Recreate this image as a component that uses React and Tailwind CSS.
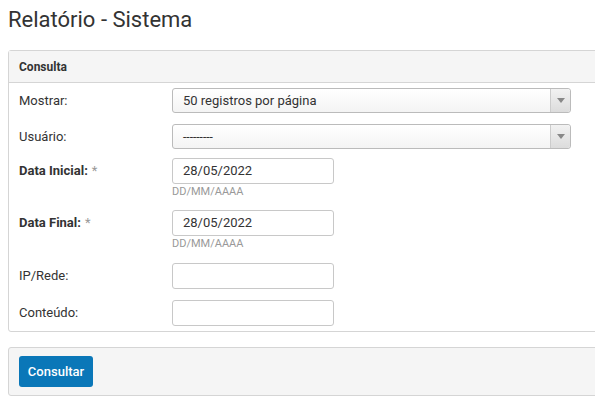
import React from "react";

const Select = ({ value, small }) => (
  <div className="relative w-[399px] h-[25px] rounded-[3px] border border-[#bbb] bg-gradient-to-b from-white to-[#f4f4f4] flex items-center">
    <span className={small ? "pl-[10px] text-[12px] text-[#333] leading-none" : "pl-[10px] text-[13px] text-[#333]"}>
      {value}
    </span>
    <div className="absolute right-0 top-0 h-full w-[20px] border-l border-[#ccc] bg-gradient-to-b from-[#f2f2f2] to-[#dcdcdc] rounded-r-[3px] flex items-center justify-center">
      <div className="w-0 h-0 border-l-[4px] border-r-[4px] border-t-[5px] border-l-transparent border-r-transparent border-t-[#888]" />
    </div>
  </div>
);

const Input = ({ value }) => (
  <div className="w-[162px] h-[26px] rounded-[3px] border border-[#c8c8c8] bg-white flex items-center px-[10px] text-[13px] text-[#333]">
    {value}
  </div>
);

const App = () => {
  return (
    <div className="w-[595px] h-[410px] overflow-hidden bg-white text-[#333]" style={{ fontFamily: "Roboto, 'Liberation Sans', sans-serif" }}>
      <h1 className="pl-[8px] pt-[8px] text-[22px] leading-[24px] text-[#333]">Relatório - Sistema</h1>

      <div className="ml-[8px] mt-[18px] w-[600px] border border-[#d5d5d5] rounded-[3px]">
        <div className="h-[32px] bg-[#f5f5f5] border-b border-[#d5d5d5] flex items-center pl-[10px] text-[12px] font-bold">
          Consulta
        </div>
        <div className="pl-[10px] pt-[5px] pb-[5px]">
          <div className="flex items-center">
            <div className="w-[153px] text-[13px]">Mostrar:</div>
            <Select value="50 registros por página" />
          </div>
          <div className="flex items-center mt-[11px]">
            <div className="w-[153px] text-[13px]">Usuário:</div>
            <Select value="---------" small />
          </div>
          <div className="flex mt-[9px]">
            <div className="w-[153px] text-[13px] font-bold h-[26px] flex items-center">
              Data Inicial:<span className="ml-[4px] font-normal text-[#999]">*</span>
            </div>
            <div>
              <Input value="28/05/2022" />
              <div className="text-[11px] text-[#999] leading-[14px] mt-[1px]">DD/MM/AAAA</div>
            </div>
          </div>
          <div className="flex mt-[11px]">
            <div className="w-[153px] text-[13px] font-bold h-[26px] flex items-center">
              Data Final:<span className="ml-[4px] font-normal text-[#999]">*</span>
            </div>
            <div>
              <Input value="28/05/2022" />
              <div className="text-[11px] text-[#999] leading-[14px] mt-[1px]">DD/MM/AAAA</div>
            </div>
          </div>
          <div className="flex items-center mt-[12px]">
            <div className="w-[153px] text-[13px]">IP/Rede:</div>
            <Input value="" />
          </div>
          <div className="flex items-center mt-[11px]">
            <div className="w-[153px] text-[13px]">Conteúdo:</div>
            <Input value="" />
          </div>
        </div>
      </div>

      <div className="ml-[8px] mt-[15px] w-[600px] h-[49px] border border-[#d5d5d5] rounded-[3px] bg-[#f5f5f5] flex items-center pl-[10px]">
        <button className="w-[74px] h-[31px] rounded-[3px] bg-[#0a77b8] text-white text-[13px] font-medium">
          Consultar
        </button>
      </div>
    </div>
  );
};

export default App;
